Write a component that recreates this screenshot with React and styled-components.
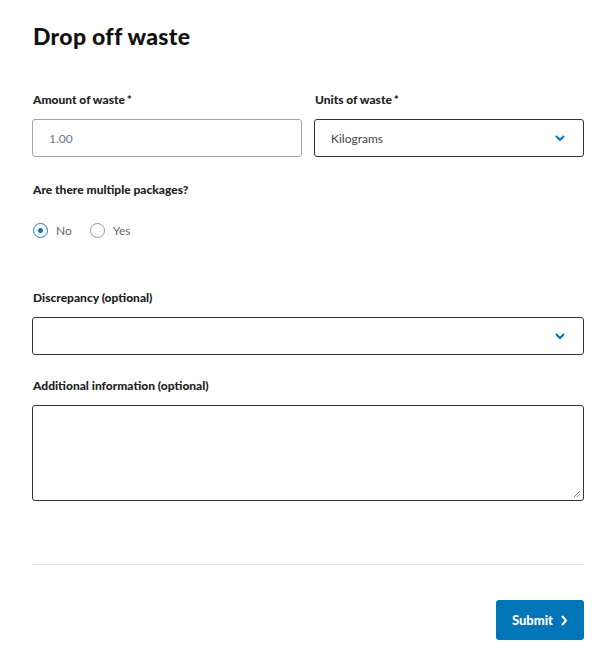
import React from 'react';
import styled, { createGlobalStyle } from 'styled-components';

const GlobalStyle = createGlobalStyle`
    body {
        margin: 0;
        background: #fff;
        font-family: "Lato", "Noto Sans", sans-serif;
        color: #1a1a1a;
    }
`;

const Page = styled.div`
    width: 552px;
    padding: 22px 28px 22px 32px;
`;

const Title = styled.h1`
    font-size: 23px;
    font-weight: 900;
    margin: 0 0 43px 1px;
    letter-spacing: 0.3px;
    color: #111;
`;

const Row = styled.div`
    display: grid;
    grid-template-columns: 1fr 1fr;
    gap: 12px;
`;

const Field = styled.div`
    display: flex;
    flex-direction: column;
    margin-bottom: ${props => props.mb || 0}px;
`;

const Label = styled.label`
    font-size: 12px;
    font-weight: 900;
    color: #222;
    margin: 0 0 12px 1px;
    line-height: 14px;
`;

const Star = styled.span`
    margin-left: 2px;
`;

const Input = styled.div`
    box-sizing: border-box;
    height: 38px;
    border: 1px solid ${props => props.dark ? '#333' : '#a6a6a6'};
    border-radius: 3px;
    display: flex;
    align-items: center;
    justify-content: space-between;
    padding: 0 18px 0 16px;
    font-size: 12px;
    color: ${props => props.muted ? '#6a7a8a' : '#444'};
`;

const TextArea = styled.div`
    box-sizing: border-box;
    height: 96px;
    border: 1px solid #333;
    border-radius: 3px;
    position: relative;
`;

const Grip = styled.svg`
    position: absolute;
    right: 2px;
    bottom: 2px;
`;

const Radios = styled.div`
    display: flex;
    gap: 18px;
    margin: 14px 0 0 1px;
`;

const RadioItem = styled.div`
    display: flex;
    align-items: center;
    gap: 8px;
    font-size: 12px;
    color: #666;
`;

const Circle = styled.span`
    box-sizing: border-box;
    width: 15px;
    height: 15px;
    border-radius: 50%;
    border: 1px solid ${props => props.checked ? '#1a7fc1' : '#8a9aaa'};
    display: flex;
    align-items: center;
    justify-content: center;
    &::after {
        content: "";
        width: 5px;
        height: 5px;
        border-radius: 50%;
        background: #1a6fb0;
        display: ${props => props.checked ? 'block' : 'none'};
    }
`;

const Divider = styled.hr`
    border: 0;
    border-top: 1px solid #e2e2e2;
    margin: 63px 0 35px;
`;

const Actions = styled.div`
    display: flex;
    justify-content: flex-end;
`;

const Button = styled.button`
    background: #0076b9;
    color: #fff;
    border: 0;
    border-radius: 3px;
    height: 40px;
    padding: 0 16px;
    font-family: inherit;
    font-size: 13px;
    font-weight: 900;
    display: flex;
    align-items: center;
    gap: 8px;
`;

const Chevron = ({ color = '#0076b9' }) => (
    <svg width="10" height="7" viewBox="0 0 10 7">
        <path d="M1.5 1.5 L5 5 L8.5 1.5" fill="none" stroke={color} strokeWidth="2" strokeLinecap="round" strokeLinejoin="round" />
    </svg>
);

const App = () => {
    return (
        <Page>
            <GlobalStyle />
            <Title>Drop off waste</Title>
            <Row>
                <Field mb={26}>
                    <Label>Amount of waste<Star>*</Star></Label>
                    <Input muted>1.00</Input>
                </Field>
                <Field mb={26}>
                    <Label>Units of waste<Star>*</Star></Label>
                    <Input dark>Kilograms<Chevron /></Input>
                </Field>
            </Row>
            <Field mb={53}>
                <Label>Are there multiple packages?</Label>
                <Radios>
                    <RadioItem><Circle checked />No</RadioItem>
                    <RadioItem><Circle />Yes</RadioItem>
                </Radios>
            </Field>
            <Field mb={24}>
                <Label>Discrepancy (optional)</Label>
                <Input dark><span /><Chevron /></Input>
            </Field>
            <Field>
                <Label>Additional information (optional)</Label>
                <TextArea>
                    <Grip width="8" height="8" viewBox="0 0 8 8">
                        <path d="M7 1 L1 7 M7 4 L4 7" stroke="#888" strokeWidth="1" />
                    </Grip>
                </TextArea>
            </Field>
            <Divider />
            <Actions>
                <Button>Submit
                    <svg width="7" height="11" viewBox="0 0 7 11">
                        <path d="M1.5 1.5 L5 5.5 L1.5 9.5" fill="none" stroke="#fff" strokeWidth="2" strokeLinecap="round" strokeLinejoin="round" />
                    </svg>
                </Button>
            </Actions>
        </Page>
    );
};

export default App;
